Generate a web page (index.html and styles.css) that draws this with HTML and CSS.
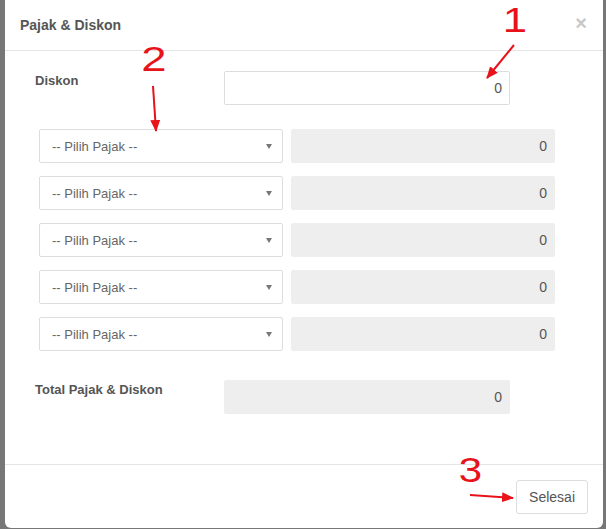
FILE: index.html
```html
<!DOCTYPE html>
<html lang="id">
<head>
<meta charset="utf-8">
<title>Pajak &amp; Diskon</title>
<link rel="stylesheet" href="styles.css">
</head>
<body>
<div class="modal">
  <div class="modal-header">
    <h4 class="modal-title">Pajak &amp; Diskon</h4>
    <button class="close" type="button">&times;</button>
  </div>
  <div class="modal-body">
    <div class="form-row">
      <label class="control-label">Diskon</label>
      <input class="control" type="text" value="0">
    </div>
    <div class="tax-list">
      <div class="tax-row">
        <div class="select-wrap"><select><option>-- Pilih Pajak --</option></select></div>
        <input class="control readonly" type="text" value="0" readonly>
      </div>
      <div class="tax-row">
        <div class="select-wrap"><select><option>-- Pilih Pajak --</option></select></div>
        <input class="control readonly" type="text" value="0" readonly>
      </div>
      <div class="tax-row">
        <div class="select-wrap"><select><option>-- Pilih Pajak --</option></select></div>
        <input class="control readonly" type="text" value="0" readonly>
      </div>
      <div class="tax-row">
        <div class="select-wrap"><select><option>-- Pilih Pajak --</option></select></div>
        <input class="control readonly" type="text" value="0" readonly>
      </div>
      <div class="tax-row">
        <div class="select-wrap"><select><option>-- Pilih Pajak --</option></select></div>
        <input class="control readonly" type="text" value="0" readonly>
      </div>
    </div>
    <div class="form-row">
      <label class="control-label">Total Pajak &amp; Diskon</label>
      <input class="control readonly" type="text" value="0" readonly>
    </div>
  </div>
  <div class="modal-footer">
    <button class="btn" type="button">Selesai</button>
  </div>
</div>

<svg class="annotations" width="606" height="529" viewBox="0 0 606 529">
  <defs>
    <marker id="head" markerUnits="userSpaceOnUse" markerWidth="12" markerHeight="10" refX="11" refY="5" orient="auto">
      <path d="M0,0 L12,5 L0,10 z" fill="#e8121a"/>
    </marker>
  </defs>
  <text class="num" transform="translate(515 32) scale(1.25 1)">1</text>
  <line x1="514" y1="45" x2="487" y2="78" stroke="#e8121a" stroke-width="2" marker-end="url(#head)"/>
  <text class="num" transform="translate(154 71) scale(1.3 1)">2</text>
  <line x1="153" y1="86" x2="156" y2="131" stroke="#e8121a" stroke-width="2" marker-end="url(#head)"/>
  <text class="num" transform="translate(470.5 482) scale(1.2 1)">3</text>
  <line x1="470" y1="495" x2="513" y2="498" stroke="#e8121a" stroke-width="2" marker-end="url(#head)"/>
</svg>
</body>
</html>
```
FILE: styles.css
```css
* {
  box-sizing: border-box;
}

html,
body {
  margin: 0;
}

body {
  position: relative;
  width: 606px;
  height: 529px;
  overflow: hidden;
  background: #777;
  font-family: "Liberation Sans", Arial, sans-serif;
  color: #555;
}

.modal {
  margin: 0 3px 0 5px;
  background: #fff;
  border-radius: 0 0 6px 6px;
}

.modal-header {
  display: flex;
  justify-content: space-between;
  align-items: center;
  padding: 15px 16px 15px 15px;
  border-bottom: 1px solid #e5e5e5;
}

.modal-title {
  margin: 0;
  font-size: 14px;
  font-weight: bold;
  line-height: 20px;
  color: #555;
}

.close {
  padding: 0;
  border: 0;
  background: none;
  font-family: "Liberation Sans", Arial, sans-serif;
  font-size: 20px;
  font-weight: bold;
  line-height: 20px;
  color: #c8c8c8;
  margin-top: -4px;
}

.modal-body {
  padding: 20px 15px 50px;
}

.form-row {
  display: grid;
  grid-template-columns: 204px 286px;
}

.control-label {
  padding: 1px 0 0 15px;
  font-size: 13px;
  font-weight: bold;
  line-height: 18px;
  color: #555;
}

.control {
  width: 100%;
  height: 34px;
  margin: 0;
  padding: 0 7px;
  border: 1px solid #ddd;
  border-radius: 2px;
  background: #fff;
  font-family: "Liberation Sans", Arial, sans-serif;
  font-size: 14px;
  color: #555;
  text-align: right;
  outline: none;
}

.control.readonly {
  background: #eee;
  border-color: #eee;
}

.tax-list {
  display: flex;
  flex-direction: column;
  gap: 13px;
  margin: 24px 0 29px 19px;
}

.tax-row {
  display: grid;
  grid-template-columns: 244px 264px;
  gap: 8px;
}

.select-wrap {
  position: relative;
}

.select-wrap::after {
  content: "";
  position: absolute;
  right: 11px;
  top: 15px;
  border-left: 3.5px solid transparent;
  border-right: 3.5px solid transparent;
  border-top: 5px solid #777;
}

.select-wrap select {
  -webkit-appearance: none;
  appearance: none;
  width: 100%;
  height: 34px;
  margin: 0;
  padding: 0 12px;
  border: 1px solid #ddd;
  border-radius: 2px;
  background: #fff;
  font-family: "Liberation Sans", Arial, sans-serif;
  font-size: 13px;
  color: #666;
  outline: none;
}

.modal-footer {
  display: flex;
  justify-content: flex-end;
  padding: 15px 15px 14px;
  border-top: 1px solid #e5e5e5;
}

.btn {
  height: 34px;
  padding: 0 12px;
  border: 1px solid #ddd;
  border-radius: 3px;
  background: #fff;
  font-family: "Liberation Sans", Arial, sans-serif;
  font-size: 14px;
  color: #555;
}

.annotations {
  position: absolute;
  top: 0;
  left: 0;
  pointer-events: none;
}

.annotations .num {
  font-family: "Liberation Sans", Arial, sans-serif;
  font-size: 35px;
  fill: #e8121a;
  text-anchor: middle;
}
```
